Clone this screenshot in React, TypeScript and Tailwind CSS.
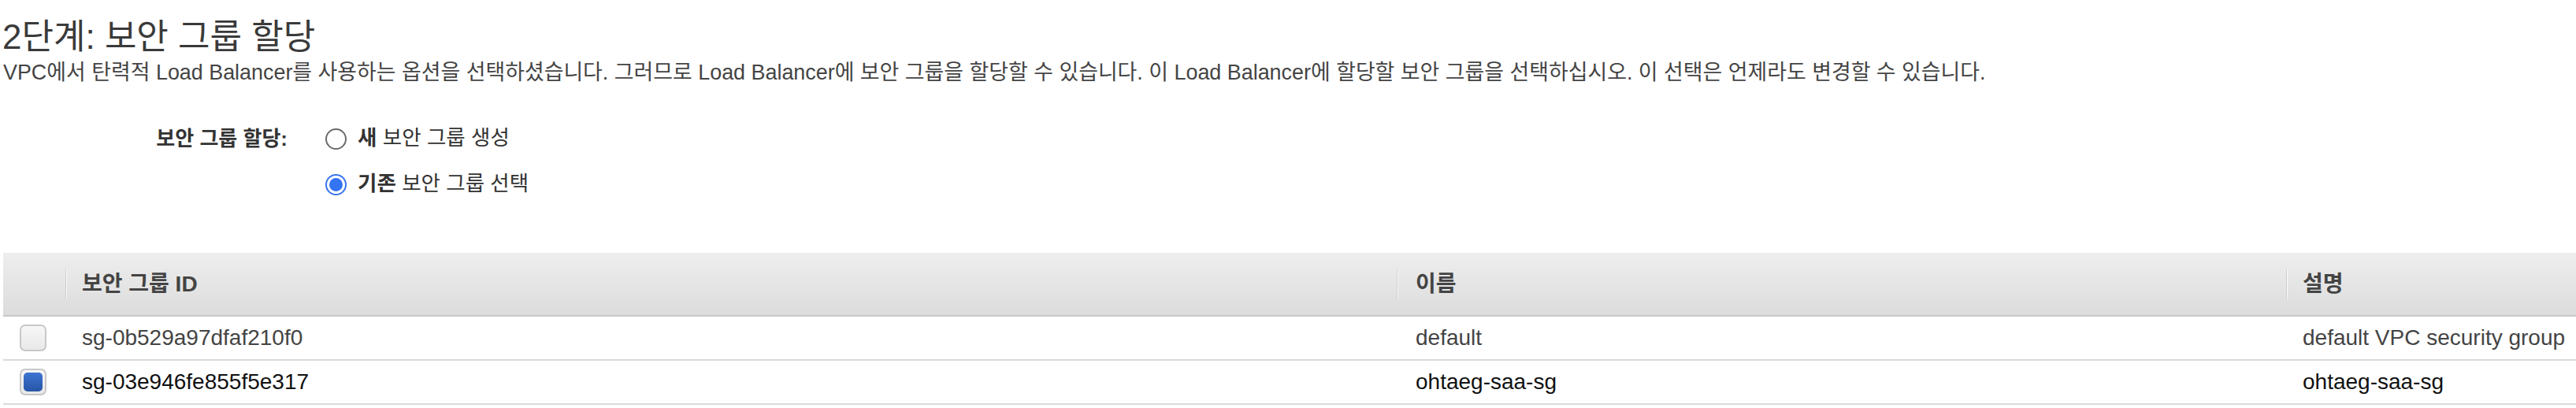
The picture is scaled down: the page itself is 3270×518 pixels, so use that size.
import React from "react";

const rows = [
  { id: "sg-0b529a97dfaf210f0", name: "default", desc: "default VPC security group", checked: false },
  { id: "sg-03e946fe855f5e317", name: "ohtaeg-saa-sg", desc: "ohtaeg-saa-sg", checked: true },
];

function Checkbox({ checked }: { checked: boolean }) {
  return (
    <div className="w-[34px] h-[34px] rounded-[7px] border-2 border-[#c8c8c8] bg-gradient-to-b from-[#f6f6f6] to-[#e9e9e9] p-[3px] flex">
      {checked && (
        <div className="flex-1 rounded-[5px] bg-gradient-to-b from-[#3d74d2] to-[#2856a6]" />
      )}
    </div>
  );
}

function Divider() {
  return (
    <div className="flex h-[37px]">
      <div className="w-px bg-[#cdcdcd]" />
      <div className="w-px bg-[#fbfbfb]" />
    </div>
  );
}

export default function App() {
  return (
    <div className="w-[3270px] h-[518px] bg-white overflow-hidden font-['Liberation_Sans','Noto_Sans_CJK_KR',sans-serif]">
      <h1 className="pl-[3px] pt-[21px] text-[44px] leading-[52px] text-[#3a3a3a]">2단계: 보안 그룹 할당</h1>
      <p className="pl-[4px] mt-[3px] text-[26.9px] leading-[32px] text-[#444] whitespace-nowrap">
        VPC에서 탄력적 Load Balancer를 사용하는 옵션을 선택하셨습니다. 그러므로 Load Balancer에 보안 그룹을 할당할 수 있습니다. 이 Load Balancer에 할당할 보안 그룹을 선택하십시오. 이 선택은 언제라도 변경할 수 있습니다.
      </p>
      <div className="flex mt-[39px]">
        <div className="w-[365px] h-[58px] flex items-center justify-end text-[26px] font-bold text-[#333]">보안 그룹 할당:</div>
        <div className="ml-[48px] flex flex-col">
          <div className="h-[58px] flex items-center gap-[14px]">
            <div className="w-[27px] h-[27px] rounded-full border-2 border-[#6b6b6b] bg-white" />
            <span className="text-[26.5px] text-[#333]"><b className="font-bold">새</b> 보안 그룹 생성</span>
          </div>
          <div className="h-[58px] flex items-center gap-[14px]">
            <div className="w-[27px] h-[27px] rounded-full border-[2.5px] border-[#3574f0] bg-white p-[3px] flex">
              <div className="flex-1 rounded-full bg-[#3574f0]" />
            </div>
            <span className="text-[26.5px] text-[#333]"><b className="font-bold">기존</b> 보안 그룹 선택</span>
          </div>
        </div>
      </div>
      <div className="ml-[4px] mt-[58px]">
        <div className="h-[81px] flex items-center bg-gradient-to-b from-[#eeeeee] to-[#dcdcdc] border-b-2 border-[#c8c8c8] text-[28px] font-bold text-[#444]">
          <div className="w-[79px]" />
          <div className="w-[1690px] flex items-center">
            <Divider />
            <span className="ml-[19px]">보안 그룹 ID</span>
          </div>
          <div className="w-[1129px] flex items-center">
            <Divider />
            <span className="ml-[22px]">이름</span>
          </div>
          <div className="flex-1 flex items-center">
            <Divider />
            <span className="ml-[19px]">설명</span>
          </div>
        </div>
        {rows.map((r) => (
          <div
            key={r.id}
            className={`h-[56px] flex items-center border-b-2 border-[#dadada] text-[28px] ${r.checked ? "text-[#111]" : "text-[#444]"}`}
          >
            <div className="w-[79px] pl-[21px] flex items-center">
              <Checkbox checked={r.checked} />
            </div>
            <div className="w-[1690px] pl-[21px]">{r.id}</div>
            <div className="w-[1129px] pl-[24px]">{r.name}</div>
            <div className="flex-1 pl-[21px] whitespace-nowrap">{r.desc}</div>
          </div>
        ))}
      </div>
    </div>
  );
}
